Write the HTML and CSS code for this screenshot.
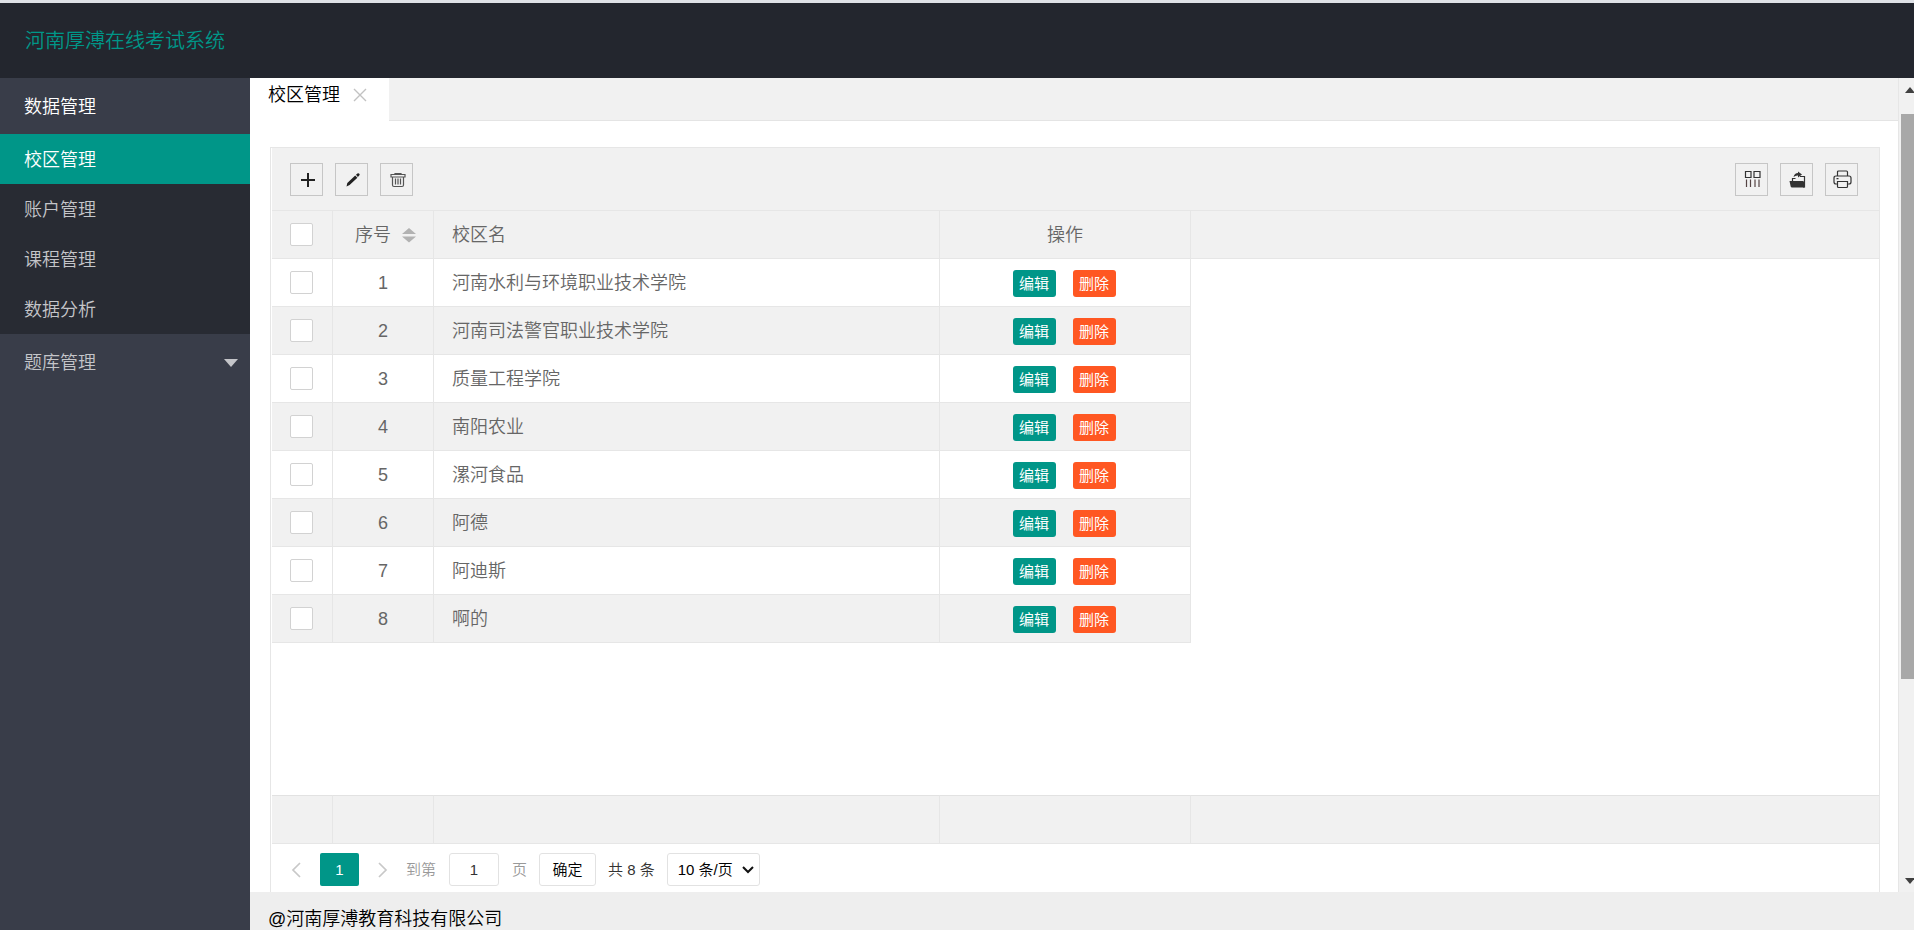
FILE: index.html
```
<!DOCTYPE html>
<html lang="zh-CN">
<head>
<meta charset="utf-8">
<title>河南厚溥在线考试系统</title>
<link rel="stylesheet" href="styles.css">
</head>
<body>
<div class="app">
  <header class="header"><a class="logo" href="#">河南厚溥在线考试系统</a></header>
  <div class="body">
    <nav class="side">
      <a class="nav-item open" href="#">数据管理</a>
      <div class="nav-child">
        <a class="sub active" href="#">校区管理</a>
        <a class="sub" href="#">账户管理</a>
        <a class="sub" href="#">课程管理</a>
        <a class="sub" href="#">数据分析</a>
      </div>
      <a class="nav-item" href="#">题库管理<span class="caret"></span></a>
    </nav>
    <div class="main">
      <div class="viewport">
        <div class="content">
          <div class="tabs">
            <div class="tab"><span>校区管理</span>
              <button class="tab-close" type="button" aria-label="关闭"><svg width="14" height="14" viewBox="0 0 14 14"><path d="M1 1l12 12M13 1L1 13" fill="none" stroke="#c2c2c2" stroke-width="1.4"/></svg></button>
            </div>
          </div>
          <section class="card">
            <div class="toolbar">
              <div class="tools">
                <button class="tool" type="button" aria-label="添加"><svg width="20" height="20" viewBox="0 0 20 20"><path d="M11 4v14M4 11h14" stroke="#222" stroke-width="2" fill="none"/></svg></button>
                <button class="tool" type="button" aria-label="编辑"><svg width="20" height="20" viewBox="0 0 20 20"><path d="M4.500 17.500l.8-3.500L13.200 6.500l2.200 2.200-7.800 7.300zM14 5.800l1.400-1.300q1.100-.7 1.900.2.900 1-.1 1.900L15.900 8z" fill="#222"/></svg></button>
                <button class="tool" type="button" aria-label="删除"><svg width="20" height="20" viewBox="0 0 20 20"><path d="M4 5.500h14v2.500H4zM8 5.500v-1h6v1M5.500 8v8q0 1.500 1.500 1.500h8q1.500 0 1.500-1.500V8M8.500 9.500v6M11 9.500v6M13.500 9.500v6" fill="none" stroke="#555" stroke-width="1.200"/></svg></button>
              </div>
              <div class="tools">
                <button class="tool" type="button" aria-label="筛选列"><svg width="20" height="20" viewBox="0 0 20 20"><path d="M3.500 2.500h5.500v6H3.500zM12 2.500h6v6h-6z" fill="none" stroke="#333" stroke-width="1.200"/><path d="M4.500 10.500v7.500M8.500 10.500v7.500M13 10.500v7.500M17 10.500v7.500" stroke="#544" stroke-width="1.200"/></svg></button>
                <button class="tool" type="button" aria-label="导出"><svg width="20" height="20" viewBox="0 0 20 20"><path d="M2.500 12h13.500l1.500 1v5.500H5q-1 0-1.300-1z" fill="#333"/><path d="M13 7.500h4.500v10.500h-1.500M5.500 12v-2.500h3" fill="none" stroke="#333" stroke-width="1.200"/><path d="M6.500 8q1-4 4.500-4V2.500l4 3-4 3V6.500q-2.500-.2-4.500 1.500z" fill="#333"/></svg></button>
                <button class="tool" type="button" aria-label="打印"><svg width="20" height="20" viewBox="0 0 20 20"><path d="M5.500 7V3q0-1 1-1h8q1 0 1 1v4M5.500 15H4q-2 0-2-2V9q0-2 2-2h13q2 0 2 2v4q0 2-2 2h-1.500M5.500 12.500h10v5q0 1-1 1h-8q-1 0-1-1zM4.500 9.700h2" fill="none" stroke="#333" stroke-width="1.200"/></svg></button>
              </div>
            </div>
            <div class="table-area">
              <table class="grid">
                <colgroup><col class="c-check"><col class="c-no"><col class="c-name"><col class="c-op"><col></colgroup>
                <thead><tr>
                  <th><input class="check" type="checkbox" aria-label="全选"></th>
                  <th><span class="sortable">序号<svg width="14" height="16" viewBox="0 0 14 16"><path d="M0 7l7-6 7 6zM0 9.500h14l-7 6z" fill="#b2b2b2"/></svg></span></th>
                  <th class="name">校区名</th><th>操作</th><th></th>
                </tr></thead>
                <tbody>
                  <tr><td><input class="check" type="checkbox" aria-label="选择 1"></td><td>1</td><td class="name">河南水利与环境职业技术学院</td><td><div class="ops"><button class="btn" type="button">编辑</button><button class="btn danger" type="button">删除</button></div></td></tr>
                  <tr><td><input class="check" type="checkbox" aria-label="选择 2"></td><td>2</td><td class="name">河南司法警官职业技术学院</td><td><div class="ops"><button class="btn" type="button">编辑</button><button class="btn danger" type="button">删除</button></div></td></tr>
                  <tr><td><input class="check" type="checkbox" aria-label="选择 3"></td><td>3</td><td class="name">质量工程学院</td><td><div class="ops"><button class="btn" type="button">编辑</button><button class="btn danger" type="button">删除</button></div></td></tr>
                  <tr><td><input class="check" type="checkbox" aria-label="选择 4"></td><td>4</td><td class="name">南阳农业</td><td><div class="ops"><button class="btn" type="button">编辑</button><button class="btn danger" type="button">删除</button></div></td></tr>
                  <tr><td><input class="check" type="checkbox" aria-label="选择 5"></td><td>5</td><td class="name">漯河食品</td><td><div class="ops"><button class="btn" type="button">编辑</button><button class="btn danger" type="button">删除</button></div></td></tr>
                  <tr><td><input class="check" type="checkbox" aria-label="选择 6"></td><td>6</td><td class="name">阿德</td><td><div class="ops"><button class="btn" type="button">编辑</button><button class="btn danger" type="button">删除</button></div></td></tr>
                  <tr><td><input class="check" type="checkbox" aria-label="选择 7"></td><td>7</td><td class="name">阿迪斯</td><td><div class="ops"><button class="btn" type="button">编辑</button><button class="btn danger" type="button">删除</button></div></td></tr>
                  <tr><td><input class="check" type="checkbox" aria-label="选择 8"></td><td>8</td><td class="name">啊的</td><td><div class="ops"><button class="btn" type="button">编辑</button><button class="btn danger" type="button">删除</button></div></td></tr>
                </tbody>
              </table>
            </div>
            <table class="grid total">
              <colgroup><col class="c-check"><col class="c-no"><col class="c-name"><col class="c-op"><col></colgroup>
              <tbody><tr><td></td><td></td><td></td><td></td><td></td></tr></tbody>
            </table>
            <div class="pager">
              <button class="page-arrow" type="button" aria-label="上一页"><svg width="10" height="16" viewBox="0 0 10 16"><path d="M9 1L2 8l7 7" fill="none" stroke="#c8c8c8" stroke-width="1.700"/></svg></button>
              <button class="page-current" type="button">1</button>
              <button class="page-arrow" type="button" aria-label="下一页"><svg width="10" height="16" viewBox="0 0 10 16"><path d="M1 1l7 7-7 7" fill="none" stroke="#c8c8c8" stroke-width="1.700"/></svg></button>
              <label class="jump">到第<input class="page-input" type="text" value="1">页</label>
              <button class="confirm" type="button">确定</button>
              <span class="count">共 8 条</span>
              <span class="limit"><select aria-label="每页条数"><option>10 条/页</option></select><svg width="12" height="8" viewBox="0 0 12 8"><path d="M1 1l5 5 5-5" fill="none" stroke="#111" stroke-width="2"/></svg></span>
            </div>
          </section>
        </div>
        <div class="scrollbar">
          <svg class="arrow" width="10" height="6" viewBox="0 0 10 6"><path d="M0 6l5-6 5 6z" fill="#404040"/></svg>
          <div class="track"><div class="thumb"></div></div>
          <svg class="arrow" width="10" height="6" viewBox="0 0 10 6"><path d="M0 0h10L5 6z" fill="#404040"/></svg>
        </div>
      </div>
      <footer class="footer">@河南厚溥教育科技有限公司</footer>
    </div>
  </div>
</div>
</body>
</html>
```
FILE: styles.css
```
* { box-sizing: border-box; }
body {
  margin: 0;
  font: 350 18px/24px "Liberation Sans", "Noto Sans CJK SC", sans-serif;
  color: #000;
}
a { color: inherit; text-decoration: none; }
button, input, select { font: inherit; color: inherit; margin: 0; padding: 0; }
svg { display: block; flex: none; }

.app { display: flex; flex-direction: column; height: 100vh; overflow: hidden; }
.header {
  display: flex; align-items: center; flex: none;
  height: 78px; padding: 0 25px;
  background: #23262e; border-top: 3px solid #dee1e6;
}
.logo { color: #009688; font-size: 20px; }
.body { display: flex; flex: 1; min-height: 0; }

.side { width: 250px; flex: none; background: #393d49; color: #c4c5c9; }
.nav-item { display: flex; align-items: center; justify-content: space-between; height: 56px; padding: 1px 12px 0 24px; }
.nav-item.open { color: #fff; }
.nav-child { background: #282b33; }
.sub { display: flex; align-items: center; height: 50px; padding: 1px 24px 0; }
.sub.active { background: #009688; color: #fff; }
.caret { border: 7px solid transparent; border-top: 8px solid #c4c5c9; border-bottom: 0; }

.main { display: flex; flex-direction: column; flex: 1; min-width: 0; }
.viewport { display: flex; flex: 1; min-height: 0; overflow: hidden; }
.content { display: flex; flex-direction: column; flex: 1; min-width: 0; background: #fff; }
.tabs { display: flex; flex: none; height: 43px; background: #f1f1f1; border-bottom: 1px solid #e4e4e4; }
.tab {
  display: flex; align-items: center; gap: 13px;
  width: 139px; height: 43px; padding: 0 0 9px 18px; background: #fff;
}
.tab-close { border: 0; background: none; }

.card {
  display: flex; flex-direction: column; flex: 1;
  margin: 26px 18px 0 20px; padding-left: 1px;
  border: 1px solid #e6e6e6; border-bottom: 0;
}
.toolbar {
  display: flex; align-items: center; justify-content: space-between;
  height: 63px; padding: 0 21px 0 18px;
  background: #f1f1f1; border-bottom: 1px solid #e6e6e6;
}
.tools { display: flex; gap: 12px; }
.tool { width: 33px; height: 33px; border: 1px solid #c6c6c6; background: none; display: flex; align-items: center; justify-content: center; }

.table-area { flex: 1; }
.grid { width: 100%; table-layout: fixed; border-collapse: separate; border-spacing: 0; color: #666; text-align: center; }
.c-check { width: 61px; }
.c-no { width: 101px; }
.c-name { width: 506px; }
.c-op { width: 251px; }
.grid th, .grid td { height: 48px; padding: 0; font-weight: inherit; border-right: 1px solid #e6e6e6; border-bottom: 1px solid #e6e6e6; vertical-align: middle; }
.grid th, .total td, .grid tr:nth-child(even) td { background: #f1f1f1; }
.grid .name { text-align: left; padding-left: 18px; }
.grid th:last-child, .total td:last-child { border-right: 0; }
.total td { height: 49px; border-top: 1px solid #e2e2e2; }
.check { appearance: none; display: block; width: 23px; height: 23px; margin-left: 18px; border: 1px solid #d2d2d2; border-radius: 2px; background: #fff; }
.sortable { display: flex; align-items: center; justify-content: center; gap: 11px; padding-left: 5px; }
.ops { display: flex; justify-content: center; gap: 17px; padding: 2px 2px 0 0; }
.btn { width: 43px; height: 27px; border: 0; border-radius: 3px; background: #009688; color: #fff; font-size: 15px; font-weight: 400; line-height: 27px; }
.btn.danger { background: #ff5722; }

.pager { display: flex; align-items: center; height: 48px; padding: 3px 18px 0; font-size: 15px; color: #333; }
.page-arrow { width: 12px; border: 0; background: none; display: flex; justify-content: center; }
.page-current { width: 39px; height: 33px; margin: 0 18px; border: 0; border-radius: 2px; background: #009688; color: #fff; }
.jump { display: flex; align-items: center; gap: 13px; margin-left: 17px; color: #999; }
.page-input { width: 50px; height: 33px; border: 1px solid #e2e2e2; border-radius: 3px; text-align: center; color: #333; }
.confirm { width: 57px; height: 33px; margin: 0 12px; border: 1px solid #e2e2e2; border-radius: 3px; background: #fff; color: #000; }
.limit { display: grid; align-items: center; margin-left: 12px; }
.limit select, .limit svg { grid-area: 1 / 1; }
.limit select { appearance: none; width: 93px; height: 33px; padding-left: 10px; border: 1px solid #e2e2e2; border-radius: 3px; background: #fff; color: #000; }
.limit svg { justify-self: end; margin-right: 6px; pointer-events: none; }

.scrollbar {
  display: flex; flex-direction: column; align-items: flex-end; flex: none;
  width: 16px; padding: 9px 0 8px; background: #f1f1f1; border-left: 1px solid #e6e6e6; overflow: hidden;
}
.arrow { margin-right: -1px; }
.track { flex: 1; width: 13px; padding: 21px 0; }
.thumb { height: 76%; background: #a8a8a8; }
.footer { flex: none; height: 38px; padding: 15px 18px 0; background: #eee; }
```
